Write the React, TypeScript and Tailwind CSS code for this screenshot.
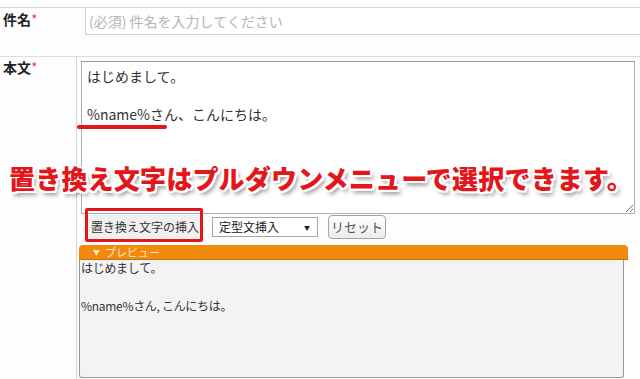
import React from 'react';

const jp = "font-['Noto_Sans_CJK_JP','Noto_Sans',sans-serif]";

export default function App() {
  const bodyText = 'はじめまして。\n\n%name%さん、こんにちは。';

  return (
    <div className={`relative w-[640px] h-[379px] overflow-hidden bg-[#fdfdfd] text-[#333] ${jp}`}>
      <div className="pt-[7px]">
        {/* 件名 */}
        <div className="flex h-[49px] border-t border-[#d6d6d6]">
          <div className="w-[77px] shrink-0 pl-[3px] pt-[1px] text-[14px] leading-[20px] font-bold text-[#222]">
            件名<span className="text-[#d9534f] font-normal">*</span>
          </div>
          <div className="pl-[8px]">
            <input
              type="text"
              placeholder="(必須) 件名を入力してください"
              className={`w-[600px] h-[27px] border border-[#cfcfcf] border-t-0 bg-white px-[3px] text-[14px] placeholder:text-[#b4b4b4] outline-none ${jp}`}
            />
          </div>
        </div>

        {/* 本文 */}
        <div className="flex border-t border-[#dcdcdc] h-[330px]">
          <div className="w-[77px] shrink-0 border-r border-[#d6d6d6] pl-[3px] text-[14px] leading-[20px] font-bold text-[#222]">
            本文<span className="text-[#d9534f] font-normal">*</span>
          </div>
          <div className="flex flex-col">
            <textarea
              readOnly
              defaultValue={bodyText}
              className={`ml-[4px] mt-[4px] w-[554px] h-[153px] border border-[#a9b1ba] border-t-[#8f9aa5] bg-white px-[5px] pt-[5px] text-[14px] leading-[19px] text-[#333] outline-none ${jp}`}
            />
            <div className="flex items-center h-[26px]">
              <button className="ml-[10px] h-[24px] px-[4px] bg-[#f0f0f0] text-[12px] text-[#333] leading-[24px]">
                置き換え文字の挿入
              </button>
              <div className="ml-[9px] flex items-center justify-between w-[106px] h-[20px] border border-[#a6a6a6] bg-white pl-[6px] pr-[7px] text-[12px] text-[#222]">
                <span>定型文挿入</span>
                <span className="text-[6px]">▼</span>
              </div>
              <button className="ml-[10px] w-[58px] h-[24px] rounded-[4px] border border-[#a3a3a3] bg-gradient-to-b from-white to-[#ececec] text-[13px] text-[#555]">
                リセット
              </button>
            </div>
            <div className="ml-[2px] mt-[5px] flex flex-col">
              <div className="w-[549px] h-[15px] rounded-t-[4px] bg-[#f28a0c] border-b border-[#c96f06] flex items-center pl-[14px] text-[11px] leading-[14px] text-[#fde8d6]">
                <span className="text-[7px] mr-[5px]">▼</span>
                プレビュー
              </div>
              <div className="w-[545px] h-[118px] bg-[#f3f3f3] border border-t-0 border-[#9a9a9a] rounded-b-[3px] pl-[1px] text-[12px] text-[#333] tracking-[-0.3px]">
                <div className="leading-[15px]">はじめまして。</div>
                <div className="mt-[23px] leading-[16px]">%name%さん, こんにちは。</div>
              </div>
            </div>
          </div>
        </div>
      </div>

      {/* annotations */}
      <div className="absolute left-[77px] top-[125px] w-[90px] h-[4px] rounded-full bg-[#e3161c]" />
      <div className="absolute left-[85px] top-[208px] w-[118px] h-[34px] border-[3px] border-[#e3161c] rounded-[2px]" />
      <div
        className={`absolute left-[9px] top-[160px] text-[26px] leading-[36px] font-black text-[#e3161c] tracking-[0.2px] whitespace-nowrap [text-shadow:2px_0_0_#fff,-2px_0_0_#fff,0_2px_0_#fff,0_-2px_0_#fff,2px_2px_0_#fff,-2px_-2px_0_#fff,2px_-2px_0_#fff,-2px_2px_0_#fff,3px_4px_4px_rgba(0,0,0,0.45)]`}
      >
        置き換え文字はプルダウンメニューで選択できます。
      </div>
    </div>
  );
}
